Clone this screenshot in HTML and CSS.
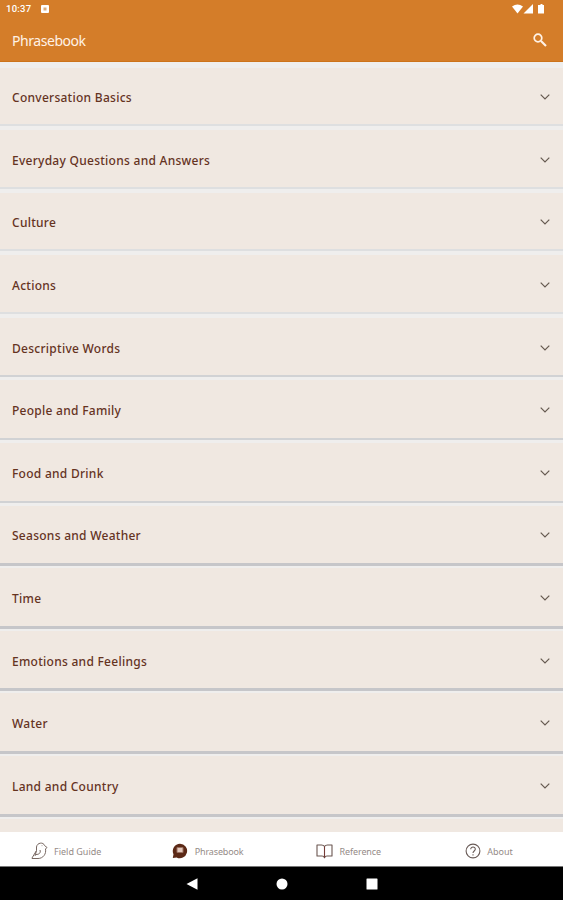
FILE: index.html
```html
<!DOCTYPE html>
<html lang="en">
<head>
<meta charset="utf-8">
<title>Phrasebook</title>
<link rel="stylesheet" href="styles.css">
</head>
<body>
<div class="app">
  <header class="header">
    <div class="status">
      <span class="clock">10:37</span>
      <svg class="notice" width="8" height="8" viewBox="0 0 8 8"><rect width="8" height="8" rx="1" fill="#fff"/><path d="M2.5 2.5h3v3h-3z" fill="#d9ab7c"/></svg>
      <svg class="signals" width="34" height="10" viewBox="0 0 34 10" fill="#fff"><path d="M0 2.6Q5.500-1.500 11 2.600L5.500 9.600Z"/><path d="M21 0v9.500h-9.500Z"/><path d="M27 1h1.500V0h2v1H32v8.600h-6V1Z"/></svg>
    </div>
    <div class="titlebar">
      <h1>Phrasebook</h1>
      <svg width="14" height="14" viewBox="0 0 14 14" fill="none" stroke="#fff2e6"><circle cx="5" cy="5" r="3.800" stroke-width="1.700"/><path d="M8 8l5 5" stroke-width="2.100"/></svg>
    </div>
  </header>
  <main class="list">
    <section class="row"><span>Conversation Basics</span><svg class="chevron" viewBox="0 0 10 6"><path d="M.7.7L5 5 9.300.7"/></svg></section>
    <section class="row"><span>Everyday Questions and Answers</span><svg class="chevron" viewBox="0 0 10 6"><path d="M.7.7L5 5 9.300.7"/></svg></section>
    <section class="row"><span>Culture</span><svg class="chevron" viewBox="0 0 10 6"><path d="M.7.7L5 5 9.300.7"/></svg></section>
    <section class="row"><span>Actions</span><svg class="chevron" viewBox="0 0 10 6"><path d="M.7.7L5 5 9.300.7"/></svg></section>
    <section class="row mid"><span>Descriptive Words</span><svg class="chevron" viewBox="0 0 10 6"><path d="M.7.7L5 5 9.300.7"/></svg></section>
    <section class="row mid"><span>People and Family</span><svg class="chevron" viewBox="0 0 10 6"><path d="M.7.7L5 5 9.300.7"/></svg></section>
    <section class="row mid"><span>Food and Drink</span><svg class="chevron" viewBox="0 0 10 6"><path d="M.7.7L5 5 9.300.7"/></svg></section>
    <section class="row low"><span>Seasons and Weather</span><svg class="chevron" viewBox="0 0 10 6"><path d="M.7.7L5 5 9.300.7"/></svg></section>
    <section class="row low"><span>Time</span><svg class="chevron" viewBox="0 0 10 6"><path d="M.7.7L5 5 9.300.7"/></svg></section>
    <section class="row low"><span>Emotions and Feelings</span><svg class="chevron" viewBox="0 0 10 6"><path d="M.7.7L5 5 9.300.7"/></svg></section>
    <section class="row low"><span>Water</span><svg class="chevron" viewBox="0 0 10 6"><path d="M.7.7L5 5 9.300.7"/></svg></section>
    <section class="row low"><span>Land and Country</span><svg class="chevron" viewBox="0 0 10 6"><path d="M.7.7L5 5 9.300.7"/></svg></section>
    <section class="row low"></section>
  </main>
  <nav class="tabs">
    <div class="tab guide"><svg width="18" height="18" viewBox="0 0 18 18" fill="none" stroke="#776761" stroke-width="1" stroke-linejoin="round"><path d="M1 16L5.500 8.500V5C6 .5 12.500-.2 13.500 3.500L16 5.500 14.500 7C15.500 12 12 16.500 7 16.500H1Z"/><path d="M5.500 8.500L4 14M9 8C10 11 8 12.500 5 12.500M11 3.500v.6"/></svg><span>Field Guide</span></div>
    <div class="tab phrases"><svg width="16" height="16" viewBox="0 0 16 16"><path d="M8 .8a7.200 7.200 0 1 1-3.400 13.600L.8 15l.7-3.800A7.200 7.200 0 0 1 8 .8Z" fill="#5c2916"/><path d="M5 4.500h6v5H5z" fill="#e4c9bd" stroke="#9a7160"/></svg><span>Phrasebook</span></div>
    <div class="tab reference"><svg width="17" height="16" viewBox="0 0 17 16" fill="none" stroke="#6b5650" stroke-width="1.100" stroke-linejoin="round"><path d="M8.500 3.500Q7.500 2 5.500 2H1v11h5q2 0 2.500 1.800Q9 13 11 13h5V2h-4.500q-2 0-3 1.500Z"/><path d="M8.500 3.500v11.300" stroke="#753b36"/></svg><span>Reference</span></div>
    <div class="tab about"><svg width="16" height="16" viewBox="0 0 16 16" fill="none" stroke="#695b57" stroke-width="1.100"><circle cx="8" cy="8" r="6.900"/><path d="M5.700 6.300C5.700 3.200 10.500 3.400 10.300 6.300 10.200 8 8 8 8 10M8 11.300v1.300"/></svg><span>About</span></div>
  </nav>
  <footer class="system">
    <svg width="12" height="12" viewBox="0 0 12 12"><path d="M.5 6L11.500.3v11.400Z"/></svg>
    <svg width="12" height="12" viewBox="0 0 12 12"><circle cx="6" cy="6" r="5.500"/></svg>
    <svg width="12" height="12" viewBox="0 0 12 12"><rect x=".5" y=".5" width="11" height="11" rx=".6"/></svg>
  </footer>
</div>
</body>
</html>
```
FILE: styles.css
```css
* { box-sizing: border-box; }
body { margin: 0; font-family: "Noto Sans", sans-serif; }
svg { display: block; flex: none; }
.app { width: 563px; height: 900px; display: flex; flex-direction: column; overflow: hidden; background: #efeeed; }
.header { height: 62px; flex: none; background: #d47d29; border-bottom: 1px solid #cc731b; color: #fff2e6; }
.status { height: 18px; display: flex; align-items: center; padding: 0 17px 0 6px; }
.clock { width: 35px; font: 500 9.5px/18px Roboto, sans-serif; letter-spacing: .25px; color: #fff; }
.signals { margin-left: auto; }
.titlebar { height: 44px; display: flex; align-items: center; justify-content: space-between; padding: 0 16px 0 12px; }
h1 { margin: 0; padding-top: 1px; font-size: 14px; font-weight: 400; line-height: 20px; letter-spacing: -.45px; }
.list { flex: 1; min-height: 0; overflow: hidden; padding-top: 5.5px; }
.row { height: 58.6px; margin-bottom: 4px; display: flex; align-items: center; justify-content: space-between; padding: 5px 13.5px 0 12px; background: #f0e8e1; border-bottom: 2px solid #dedfe0; color: #65331f; font-size: 12px; font-weight: 500; line-height: 18px; letter-spacing: .27px; }
.row.mid { height: 59.6px; margin-bottom: 3px; padding-top: 4px; border-bottom-color: #d1d2d4; }
.row.low { height: 60.6px; margin-bottom: 2px; padding-top: 4px; border-bottom: 3px solid #c6c6c9; }
.chevron { width: 10px; height: 6px; margin-top: -2px; fill: none; stroke: #655950; stroke-width: 1.2; }
.tabs { flex: none; height: 35px; display: grid; grid-template-columns: repeat(4, 1fr); background: #fff; border-bottom: 1px solid #777; }
.tab { display: flex; align-items: center; font-size: 9px; color: #958b87; padding-top: 4px; }
.guide { padding-left: 31px; gap: 5px; }
.phrases { padding-left: 31px; gap: 7px; letter-spacing: -.15px; }
.reference { padding-left: 34px; gap: 7px; letter-spacing: -.1px; }
.about { padding-left: 43px; gap: 6px; }
.system { height: 33px; flex: none; display: flex; justify-content: center; align-items: center; gap: 78px; background: #000; fill: #fff; }
```
